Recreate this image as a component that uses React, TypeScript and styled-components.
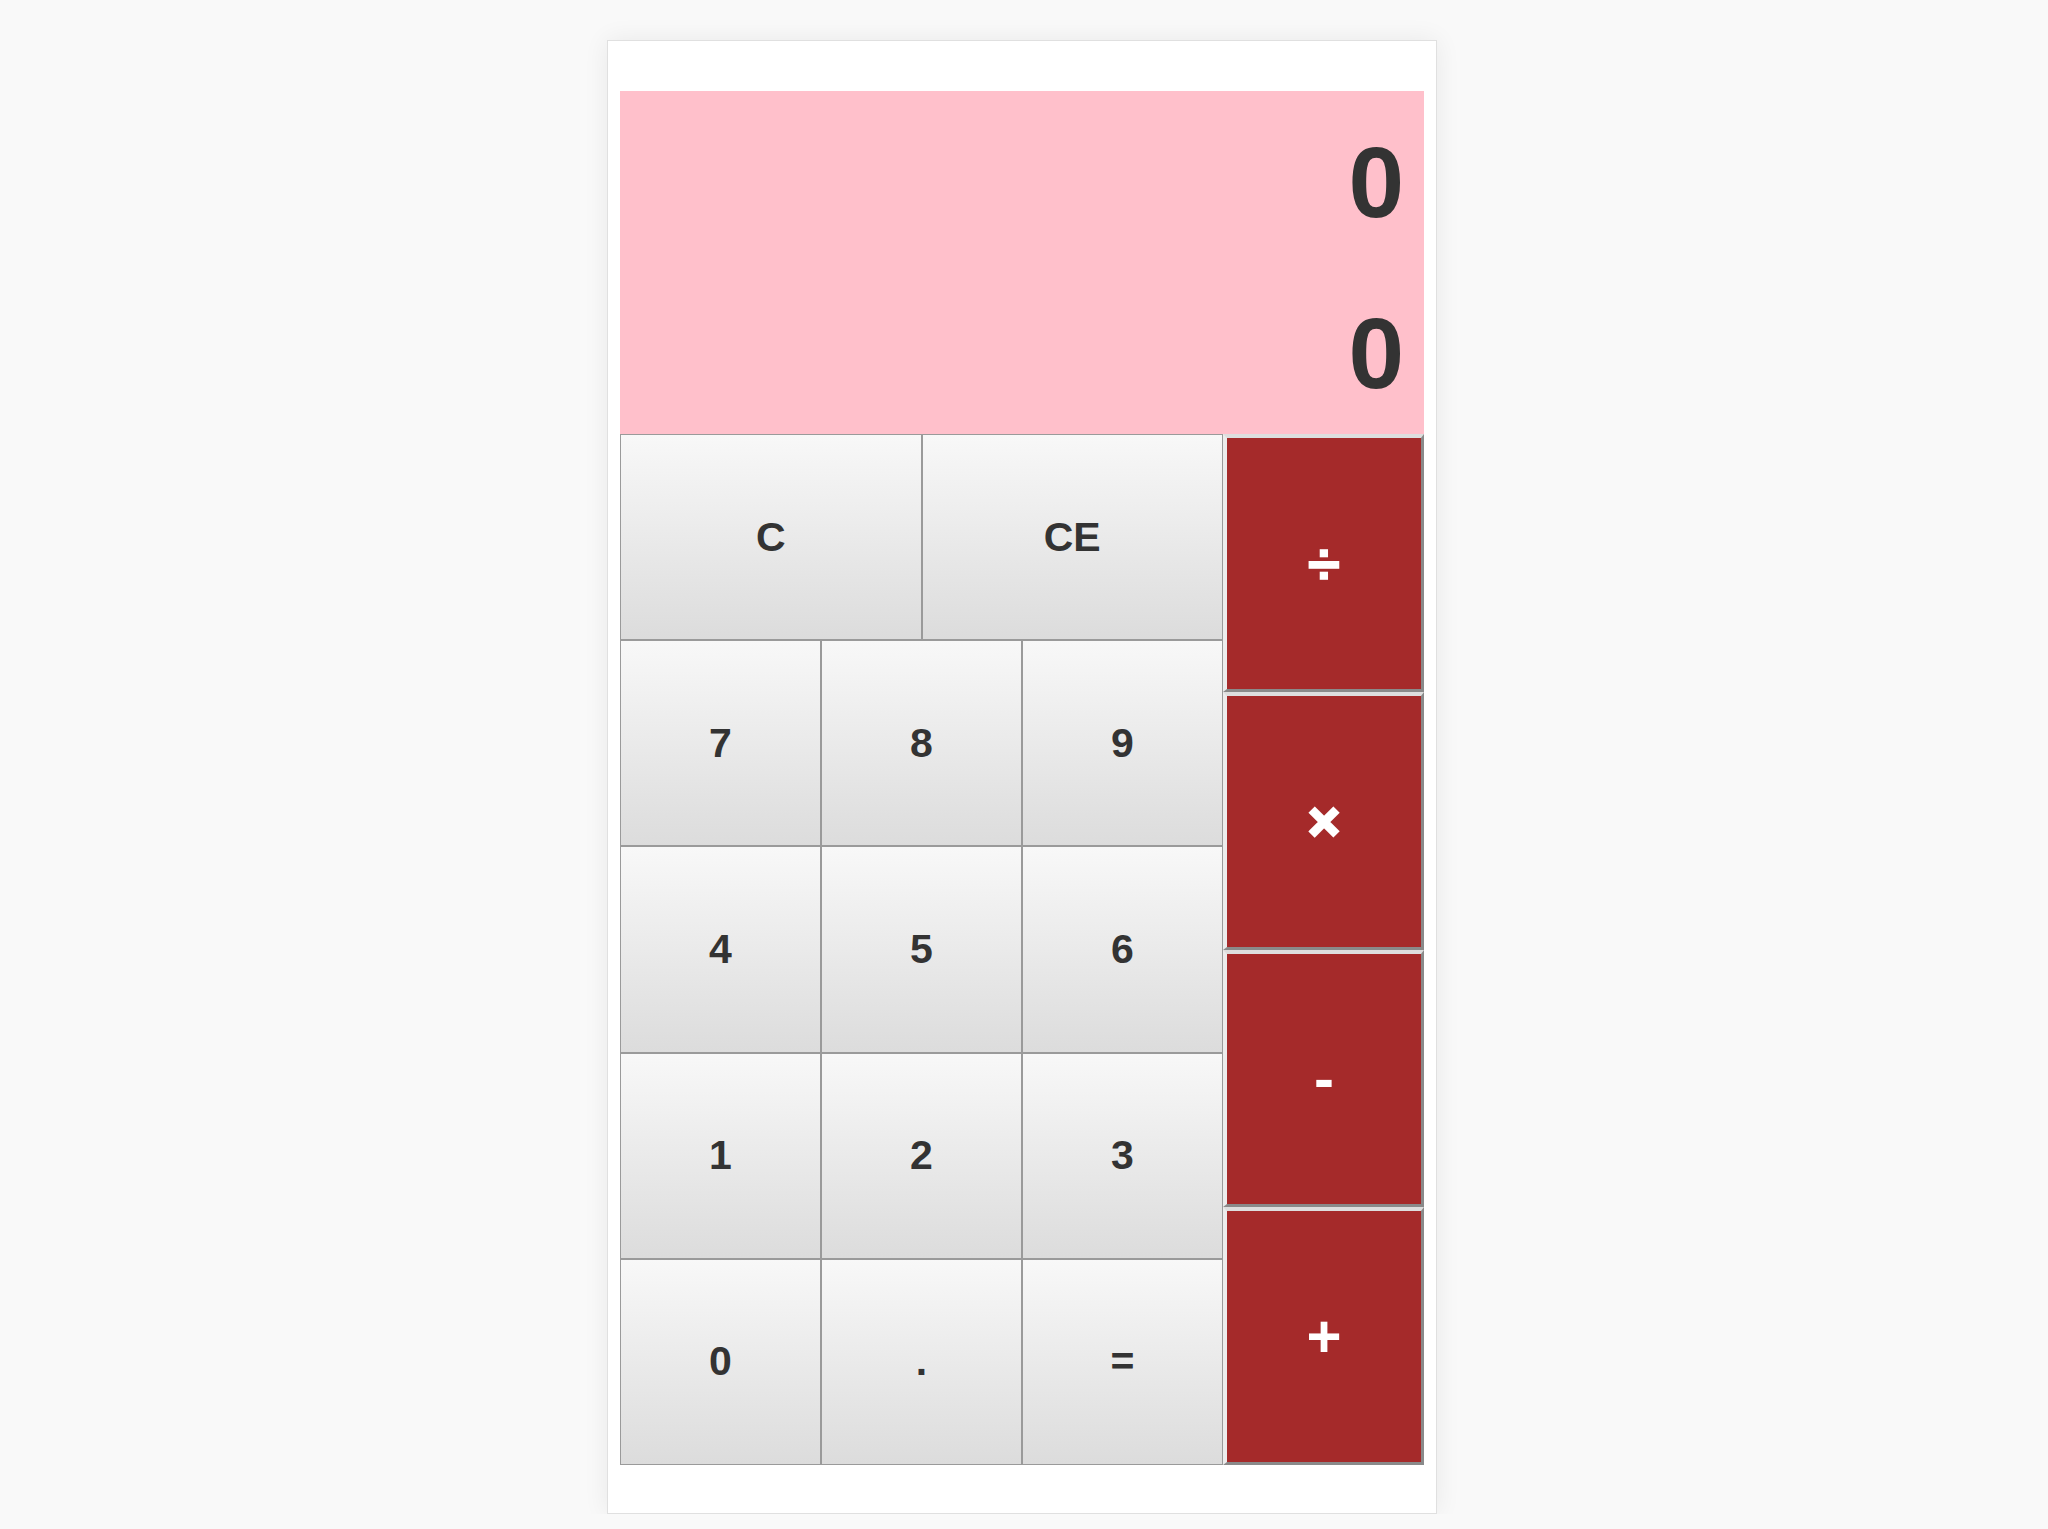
import React from "react";
import styled, { createGlobalStyle } from "styled-components";

const GlobalStyle = createGlobalStyle`
  html, body {
    margin: 0;
    padding: 0;
    background: #f9f9f9;
    font-family: "Liberation Sans", Arial, sans-serif;
  }
`;

const Page = styled.div`
  display: flex;
  justify-content: center;
  padding: 40px 4px 0 0;
`;

const Card = styled.div`
  box-sizing: border-box;
  width: 830px;
  background: #ffffff;
  border: 1px solid #e0e0e0;
  box-shadow: 0 0 24px rgba(0, 0, 0, 0.07);
  padding: 50px 12px 48px 12px;
`;

const Display = styled.div`
  box-sizing: border-box;
  height: 343px;
  background: #ffc0cb;
  padding: 41px 20px 31px 20px;
  display: flex;
  flex-direction: column;
  align-items: flex-end;
  gap: 71px;
`;

const DisplayLine = styled.div`
  font-size: 100px;
  line-height: 100px;
  font-weight: bold;
  color: #333333;
`;

const Keys = styled.div`
  display: grid;
  grid-template-columns: 603px 201px;
  height: 1031px;
`;

const Pad = styled.div`
  display: grid;
  grid-template-columns: repeat(6, 1fr);
  grid-template-rows: repeat(5, 1fr);
`;

const Key = styled.button<{ $span: number }>`
  grid-column: span ${(p) => p.$span};
  box-sizing: border-box;
  margin: 0;
  border: 1px solid #9a9a9a;
  background: linear-gradient(#f8f8f8, #dcdcdc);
  font-family: "Liberation Sans", Arial, sans-serif;
  font-size: 41px;
  font-weight: bold;
  color: #333333;
  cursor: pointer;
  padding: 0;
`;

const OpColumn = styled.div`
  display: flex;
  flex-direction: column;
`;

const OpKey = styled.button<{ $size: number; $stroke: number }>`
  flex: 1;
  box-sizing: border-box;
  margin: 0;
  padding: 0;
  background: #a52a2a;
  border-style: solid;
  border-width: 4px 3px 3px 4px;
  border-color: #dedede #8a8a8a #8a8a8a #ececec;
  font-family: "Liberation Sans", Arial, sans-serif;
  font-size: ${(p) => p.$size}px;
  font-weight: bold;
  color: #ffffff;
  -webkit-text-stroke: ${(p) => p.$stroke}px #ffffff;
  cursor: pointer;
`;

const padKeys: { label: string; span: number }[] = [
  { label: "C", span: 3 },
  { label: "CE", span: 3 },
  { label: "7", span: 2 },
  { label: "8", span: 2 },
  { label: "9", span: 2 },
  { label: "4", span: 2 },
  { label: "5", span: 2 },
  { label: "6", span: 2 },
  { label: "1", span: 2 },
  { label: "2", span: 2 },
  { label: "3", span: 2 },
  { label: "0", span: 2 },
  { label: ".", span: 2 },
  { label: "=", span: 2 },
];

const ops: { label: string; size: number; stroke: number }[] = [
  { label: "÷", size: 58, stroke: 1.5 },
  { label: "×", size: 54, stroke: 3 },
  { label: "-", size: 60, stroke: 0 },
  { label: "+", size: 60, stroke: 0 },
];

export default function App() {
  return (
    <>
      <GlobalStyle />
      <Page>
        <Card>
          <Display>
            <DisplayLine>0</DisplayLine>
            <DisplayLine>0</DisplayLine>
          </Display>
          <Keys>
            <Pad>
              {padKeys.map((k) => (
                <Key key={k.label} $span={k.span}>
                  {k.label}
                </Key>
              ))}
            </Pad>
            <OpColumn>
              {ops.map((o) => (
                <OpKey key={o.label} $size={o.size} $stroke={o.stroke}>
                  {o.label}
                </OpKey>
              ))}
            </OpColumn>
          </Keys>
        </Card>
      </Page>
    </>
  );
}
